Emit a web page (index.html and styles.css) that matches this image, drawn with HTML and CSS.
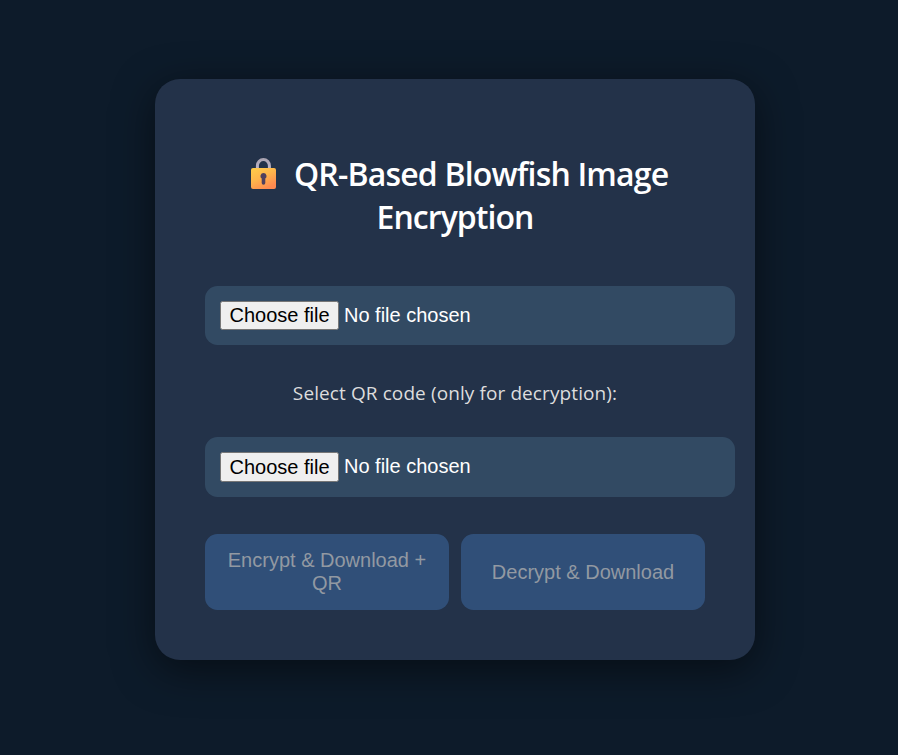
FILE: index.html
```html
<!DOCTYPE html>
<html lang="en">
<head>
<meta charset="utf-8">
<title>QR-Based Blowfish Image Encryption</title>
<link rel="stylesheet" href="styles.css">
</head>
<body>
<main class="card">
  <h1 class="title">
    <span class="title-row"><svg class="lock" viewBox="0 0 26 32" aria-hidden="true">
      <defs>
        <linearGradient id="body" x1="0" y1="0" x2="0.6" y2="1"><stop offset="0" stop-color="#ffcd49"/><stop offset="0.5" stop-color="#ffb64b"/><stop offset="1" stop-color="#ff8a50"/></linearGradient>
        <linearGradient id="shackle" x1="0" y1="0" x2="0" y2="1"><stop offset="0" stop-color="#aaa4b2"/><stop offset="1" stop-color="#c2b9cc"/></linearGradient>
      </defs>
      <path d="M7.4 13V7.8a6 6.2 0 0 1 12 0V13" fill="none" stroke="url(#shackle)" stroke-width="3"/>
      <rect x="1" y="10" width="25" height="21" rx="2" fill="url(#body)"/>
      <path d="M13.5 15a3.1 3.1 0 0 1 1.8 5.6v4.4a1.8 1.8 0 0 1-3.6 0v-4.4a3.1 3.1 0 0 1 1.8-5.6z" fill="#50405e"/>
    </svg><span class="title-first">QR-Based Blowfish Image</span></span>
    <span class="title-second">Encryption</span>
  </h1>
  <div class="file-field"><button class="choose" type="button">Choose file</button><span class="file-name">No file chosen</span></div>
  <p class="hint">Select QR code (only for decryption):</p>
  <div class="file-field file-field-qr"><button class="choose" type="button">Choose file</button><span class="file-name">No file chosen</span></div>
  <div class="actions">
    <button class="action" disabled>Encrypt &amp; Download + QR</button>
    <button class="action" disabled>Decrypt &amp; Download</button>
  </div>
</main>
</body>
</html>
```
FILE: styles.css
```css
* { box-sizing: border-box; }
body {
  margin: 0;
  height: 755px;
  padding: 79px 0 0 155px;
  overflow: hidden;
  background: #0d1b2a;
  color: #fff;
  font-family: "Open Sans", "Noto Sans", sans-serif;
}
.card {
  width: 600px;
  height: 581px;
  padding: 73px 50px 50px;
  border-radius: 25px;
  background: #233249;
  box-shadow: 0 10px 40px rgba(0, 0, 0, 0.5);
}
.title {
  height: 86px;
  margin: 0 0 48px;
  font-size: 32px;
  font-weight: 600;
  line-height: 43px;
  text-align: center;
  white-space: nowrap;
}
.title-row { display: flex; padding-left: 45px; }
.title-second { display: block; letter-spacing: -0.95px; }
.title-first { margin-left: 18px; letter-spacing: -0.82px; }
.lock { width: 26px; height: 32px; margin-top: 6px; }
.file-field {
  display: flex;
  align-items: center;
  width: 530px;
  height: 59px;
  padding: 0 15px;
  border-radius: 12.5px;
  background: #324a63;
  font: 20px "Liberation Sans", Arial, sans-serif;
}
.file-field-qr { height: 60px; }
.choose {
  width: 119px;
  height: 29px;
  padding: 0;
  border: 1px solid #767676;
  border-radius: 2.5px;
  background: #efefef;
  color: #000;
  font: inherit;
}
.file-field-qr .choose { height: 30px; }
.file-name { margin-left: 5px; }
.file-field-qr .file-name { padding-bottom: 2px; }
.hint {
  height: 27px;
  margin: 35px 0 30px;
  color: #ddd;
  font-size: 19px;
  letter-spacing: 0.1px;
  line-height: 27px;
  text-align: center;
  white-space: nowrap;
}
.actions { display: flex; gap: 12px; margin-top: 37px; }
.action {
  flex: 1 1 0;
  height: 76px;
  padding: 0 18px;
  border: 0;
  border-radius: 12.5px;
  background: #304f78;
  color: #9299a2;
  font: 20px/23px "Liberation Sans", Arial, sans-serif;
}
```
